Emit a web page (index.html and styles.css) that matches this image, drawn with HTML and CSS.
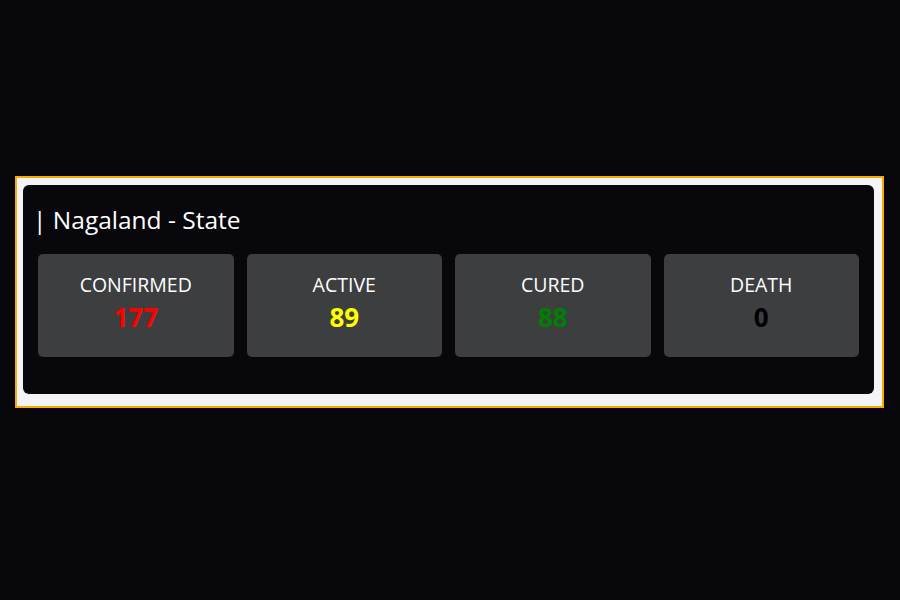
FILE: index.html
```html
<!DOCTYPE html>
<html lang="en">
<head>
  <meta charset="UTF-8" />
  <title>Nagaland - State</title>
  <link rel="stylesheet" href="styles.css">
</head>
<body>

<div class="frame">
  <div class="card">
    <h2 class="title">| Nagaland - State</h2>
    <div class="stats">
      <div class="stat">
        <div class="label">CONFIRMED</div>
        <div class="num confirmed">177</div>
      </div>
      <div class="stat">
        <div class="label">ACTIVE</div>
        <div class="num active">89</div>
      </div>
      <div class="stat">
        <div class="label">CURED</div>
        <div class="num cured">88</div>
      </div>
      <div class="stat">
        <div class="label">DEATH</div>
        <div class="num death">0</div>
      </div>
    </div>
  </div>
</div>

</body>
</html>
```

FILE: styles.css
```css
body {
  background: #07070c;
  margin: 0;
  padding: 176px 0 0 15px;
  font-family: 'Open Sans', sans-serif;
  color: #fff;
}
.frame {
  width: 869px;
  box-sizing: border-box;
  border: 2px solid #fbab00;
  background: #f4f4f6;
  padding: 7px 8px 12px 6px;
}
.card {
  background: #07070c;
  border-radius: 6px;
  padding: 20px 15px 37px 15px;
}
.title {
  margin: 0 0 19px 0;
  font-size: 24.5px;
  font-weight: 400;
  line-height: 30px;
  text-indent: -5px;
}
.stats {
  display: grid;
  grid-template-columns: repeat(4, 1fr);
  gap: 13px;
}
.stat {
  background: #3d3e40;
  border-radius: 5px;
  height: 103px;
  box-sizing: border-box;
  padding-top: 16px;
  text-align: center;
}
.label {
  font-size: 19.5px;
  line-height: 30px;
}
.num {
  font-size: 26px;
  font-weight: 700;
  line-height: 35px;
}
.confirmed { color: #ff0000; }
.active { color: #ffff00; }
.cured { color: #008000; }
.death { color: #000; }
```
